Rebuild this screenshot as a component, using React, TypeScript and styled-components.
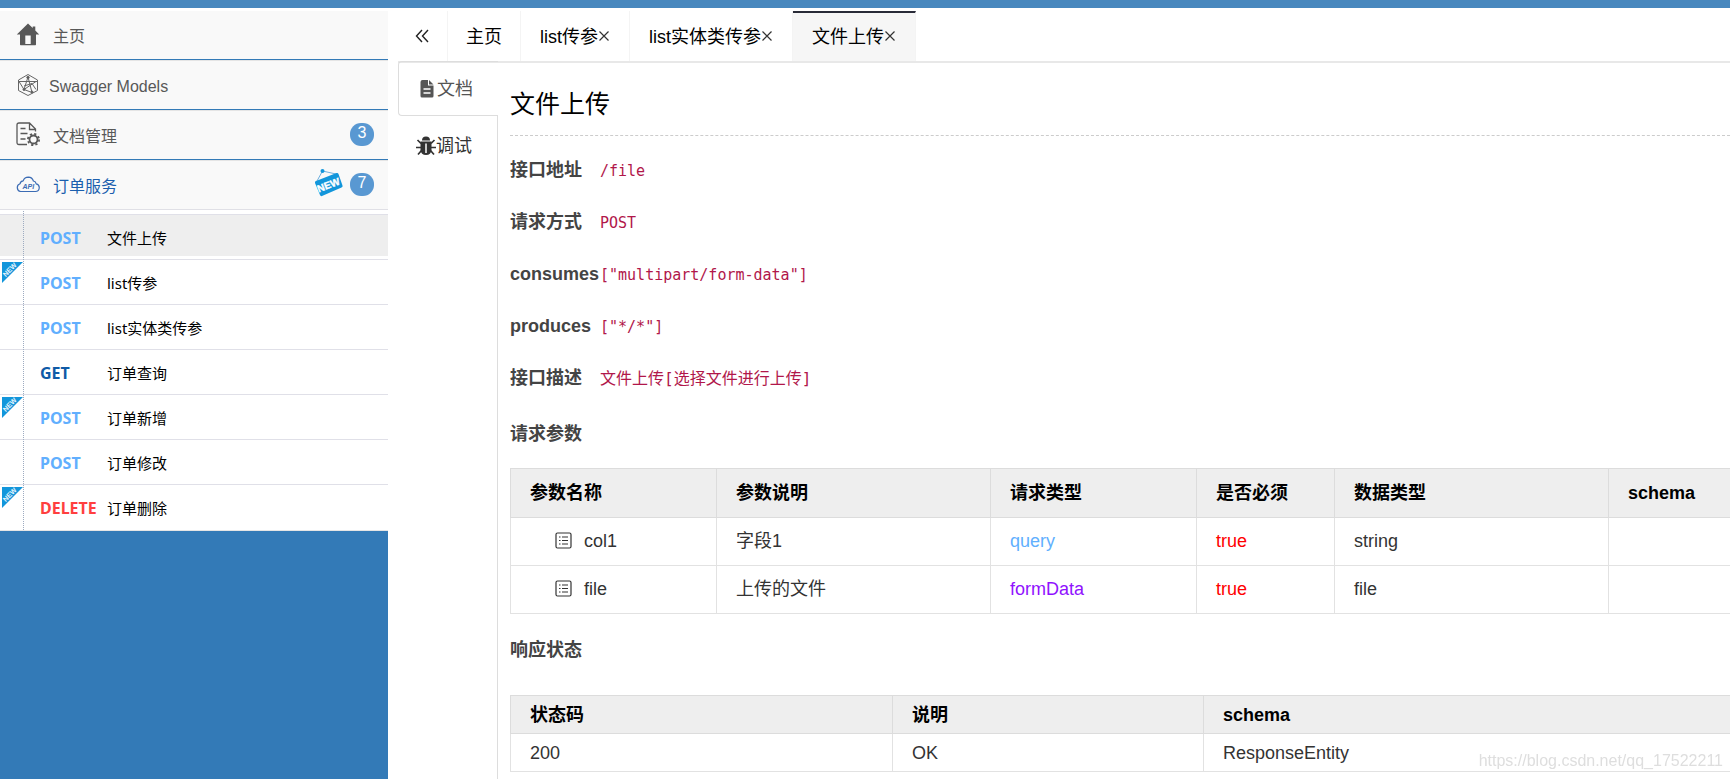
import React from 'react';
import styled, { createGlobalStyle, css } from 'styled-components';

const GlobalStyle = createGlobalStyle`
  *, *::before, *::after { box-sizing: border-box; }
  html, body, #root { height: 100%; }
  body {
    margin: 0;
    overflow: hidden;
    background: #fff;
    color: #333;
    font-family: "Liberation Sans", "Noto Sans CJK SC", sans-serif;
    font-size: 16px;
  }
  ul { list-style: none; margin: 0; padding: 0; }
  h1, h2, dl, dt, dd { margin: 0; }
  button { font: inherit; color: inherit; border: 0; background: none; padding: 0; cursor: pointer; }
  a { color: inherit; text-decoration: none; }
  svg { display: block; flex: none; }
`;

const Page = styled.div`
  display: flex;
  flex-direction: column;
  height: 100%;
`;

const TopBar = styled.header`
  flex: none;
  height: 8px;
  background: #4888be;
`;

const Body = styled.div`
  display: flex;
  flex: 1;
  min-height: 0;
`;

const Sidebar = styled.nav`
  flex: none;
  width: 388px;
  background: #337ab7;
`;

const MenuLink = styled.a<{ $active?: boolean; $gap: number }>`
  display: flex;
  align-items: center;
  gap: ${(p) => p.$gap}px;
  height: 50px;
  padding: 0 14px 0 16px;
  background: #f9f9f9;
  border-top: 1px solid #e5e5e5;
  border-bottom: 1px solid ${(p) => (p.$active ? '#e0e0e6' : '#337ab7')};
  color: ${(p) => (p.$active ? '#1b5fae' : '#585858')};
`;

const Menu = styled.ul`
  padding-top: 2px;
  background: #fff;
  > li:first-child > ${MenuLink} {
    border-top-color: #fff;
  }
`;

const MenuText = styled.span`
  flex: 1;
  padding-top: 4px;
  line-height: 24px;
`;

const Badge = styled.span`
  width: 24px;
  height: 23px;
  margin-bottom: 2px;
  border-radius: 11px;
  background: #5998d2;
  color: #fff;
  line-height: 20px;
  text-align: center;
`;

const TagSlot = styled.span`
  margin: 0 -6px 4px 0;
`;

const ApiList = styled.ul`
  position: relative;
  padding: 4px 0 1px;
  background: #fff;
  border-bottom: 1px solid #e5e5e5;
  &::before {
    content: '';
    position: absolute;
    z-index: 1;
    left: 23px;
    top: 1px;
    bottom: 0;
    border-left: 1px dotted #9dabc0;
  }
`;

const ApiItem = styled.li`
  position: relative;
  height: 45px;
  border-top: 1px solid #e0e0e8;
`;

const ApiLink = styled.a<{ $active?: boolean }>`
  display: flex;
  align-items: center;
  height: 41px;
  padding: 4px 0 0 40px;
  background: ${(p) => (p.$active ? '#eee' : 'transparent')};
  color: #000;
  font-family: "Noto Sans", "Noto Sans CJK SC", sans-serif;
  font-size: 15px;
  line-height: 24px;
`;

const methodColors = { POST: '#61affe', GET: '#0f5ba7', DELETE: '#ff3f3f' };
type Method = keyof typeof methodColors;

const MethodName = styled.span<{ $method: Method }>`
  width: 67px;
  font-size: 16px;
  font-weight: 700;
  color: ${(p) => methodColors[p.$method]};
`;

const Corner = styled.span`
  position: absolute;
  left: 2px;
  top: 2px;
`;

const Main = styled.main`
  display: flex;
  flex-direction: column;
  flex: 1;
  min-width: 0;
  padding-left: 10px;
`;

const TabBar = styled.div`
  display: flex;
  flex: none;
  height: 55px;
  padding-top: 3px;
  border-bottom: 2px solid #e8e8e8;
  font-size: 18px;
  color: #000;
`;

const Collapse = styled.button`
  width: 50px;
  padding-left: 16px;
  border-right: 1px solid #f4f4f4;
`;

const Tab = styled.div<{ $active?: boolean; $closable?: boolean }>`
  display: flex;
  align-items: center;
  padding: 0 ${(p) => (p.$closable ? 19 : 18)}px 3px;
  border-right: 1px solid #f4f4f4;
  ${(p) =>
    p.$active &&
    css`
      background: #f6f6f6;
      border-top: 2px solid #292b38;
      padding-bottom: 5px;
    `}
`;

const CloseButton = styled.button`
  padding-top: 3px;
`;

const Panel = styled.div`
  display: flex;
  flex: 1;
  min-height: 0;
`;

const SideTabs = styled.div`
  display: flex;
  flex-direction: column;
  flex: none;
  width: 100px;
  margin-top: -2px;
  &::after {
    content: '';
    flex: 1;
    border-right: 1px solid #ddd;
  }
`;

const SideTab = styled.button<{ $active?: boolean }>`
  display: flex;
  align-items: center;
  height: 55px;
  font-size: 18px;
  line-height: 24px;
  ${(p) =>
    p.$active
      ? css`
          padding-left: 20px;
          gap: 2px;
          color: #555;
          border: 1px solid #ddd;
          border-right: 0;
          border-radius: 4px 0 0 4px;
        `
      : css`
          padding-left: 18px;
          padding-top: 4px;
          border-right: 1px solid #ddd;
        `}
`;

const Doc = styled.article`
  flex: 1;
  min-width: 0;
  overflow: hidden;
  padding-left: 12px;
`;

const Title = styled.h1`
  padding: 23px 0 13px;
  border-bottom: 1px dashed #ccc;
  color: #000;
  font-size: 25px;
  font-weight: 400;
  line-height: 36px;
`;

const Fields = styled.dl`
  padding: 8px 0 4px;
`;

const Field = styled.div`
  display: flex;
  align-items: center;
  height: 52px;
  margin-bottom: 0;
`;

const FieldName = styled.dt`
  width: 90px;
  color: #444;
  font-size: 18px;
  font-weight: 700;
  line-height: 24px;
`;

const FieldValue = styled.dd`
  padding-top: 2px;
`;

const Code = styled.code<{ $cjk?: boolean }>`
  color: #b1174a;
  font-family: "DejaVu Sans Mono", "Noto Sans CJK SC", monospace;
  font-size: ${(p) => (p.$cjk ? 16 : 15)}px;
  line-height: 24px;
`;

const Heading = styled.h2`
  color: #444;
  font-size: 18px;
  font-weight: 700;
  line-height: 24px;
`;

const Section = styled.section<{ $spaced?: boolean }>`
  display: flex;
  flex-direction: column;
  gap: ${(p) => (p.$spaced ? 33 : 22)}px;
  padding-top: ${(p) => (p.$spaced ? 24 : 14)}px;
`;

const Table = styled.table<{ $compact?: boolean }>`
  width: 1376px;
  table-layout: fixed;
  border-collapse: collapse;
  font-size: 18px;
  line-height: 24px;
  th, td {
    height: ${(p) => (p.$compact ? 38 : 48)}px;
    padding: 0 19px ${(p) => (p.$compact ? 0 : 2)}px;
    border: 1px solid #e2e2e2;
    text-align: left;
  }
  th {
    height: ${(p) => (p.$compact ? 38 : 49)}px;
    padding-bottom: 0;
    background: #eee;
    color: #000;
    border-color: #dcdcdc;
  }
`;

const Col = styled.col<{ $w: number }>`
  width: ${(p) => p.$w}px;
`;

const ParamName = styled.span`
  display: flex;
  align-items: center;
  gap: 12px;
  padding-left: 25px;
`;

const Kind = styled.span<{ $color: string }>`
  color: ${(p) => p.$color};
`;

const Watermark = styled.span`
  position: fixed;
  right: 7px;
  bottom: 7px;
  color: #dedede;
  font-size: 16px;
  line-height: 22px;
`;

const HomeIcon = () => (
  <svg width="24" height="24" viewBox="0 0 24 24" fill="#585858">
    <path fillRule="evenodd" d="M12 .500.800 11.500H4V21.500q0 .700.700.700h14.600q.700 0 .700-.700V11.500h3.200L19.300 7.600V3.500h-2.600v1.600zM9.300 12.500h5.400v8.500H9.300z" />
  </svg>
);

const ModelsIcon = () => (
  <svg width="24" height="24" viewBox="0 0 24 24" fill="none" stroke="#666" strokeWidth="1">
    <path d="M12 1.500 21.500 7v10.500L12 22.500 2.500 17.500V7z" />
    <path d="M3 8.500h18M3 8.500l5 8 8 3M12 4 8 16.500 20 8.500M12 4l4 15.500M8 13l8-2.500 4 6" />
    <circle cx="12" cy="4.500" r="1.200" fill="#585858" />
    <circle cx="8" cy="16.500" r="1" fill="#585858" />
    <circle cx="16" cy="19" r="1" fill="#585858" />
  </svg>
);

const DocSettingsIcon = () => (
  <svg width="24" height="26" viewBox="0 0 24 26" fill="none" stroke="#585858" strokeWidth="1.300">
    <path d="M11 22.500H3Q1 22.500 1 20.500V3Q1 1 3 1h10.500l6 6v2.500M13.500 1v6.500h6M4.500 6.500h5M4.500 11.500h7M4.500 17h5" />
    <circle cx="17.500" cy="17.500" r="4" strokeWidth="1.800" />
    <circle cx="17.500" cy="17.500" r="5.600" strokeWidth="1.800" strokeDasharray="2.200 2.198" />
  </svg>
);

const CloudApiIcon = () => (
  <svg width="24" height="24" viewBox="0 0 24 24" fill="none" stroke="#3c6cb4" strokeWidth="1.200">
    <path d="M4.500 18.500h15a3.900 3.900 0 0 0 .700-7.700q-.400-2.300-2.800-2.800Q16.200 4.300 12.400 4.200 8.500 4.200 7.200 7.800 4.500 8 4 10.800A4 4 0 0 0 4.500 18.500z" />
    <text x="12.300" y="15.500" fontSize="7" fontStyle="italic" fontWeight="700" textAnchor="middle" fill="#3c6cb4" stroke="none" fontFamily="Liberation Sans, sans-serif">API</text>
  </svg>
);

const NewTagIcon = () => (
  <svg width="29" height="28" viewBox="0 0 29 28">
    <path d="M3 12 8.500 2 22 5" fill="none" stroke="#6fb0e0" strokeWidth="1" />
    <circle cx="8.500" cy="2" r="2" fill="#1296db" />
    <path d="M2 12 22.500 4q1.500-.5 2 1l4 11.500q.5 1.500-1 2L8 27q-1.500.5-2-1L1 14q-.5-1.500 1-2z" fill="#1296db" />
    <text x="14.500" y="19.500" fontSize="10" fontWeight="700" textAnchor="middle" fill="#fff" stroke="#fff" strokeWidth=".4" transform="rotate(-21 14.500 16)" fontFamily="Liberation Sans, sans-serif">NEW</text>
  </svg>
);

const NewCornerIcon = () => (
  <svg width="21" height="21" viewBox="0 0 21 21" overflow="visible">
    <path d="M0 0h21L0 21z" fill="#1296db" />
    <text x="8" y="10" fontSize="7" fontWeight="700" textAnchor="middle" fill="#e4f3fc" transform="rotate(-45 8 8)" fontFamily="Liberation Sans, sans-serif">NEW</text>
  </svg>
);

const CollapseIcon = () => (
  <svg width="16" height="16" viewBox="0 0 16 16" fill="none" stroke="#222" strokeWidth="1.400">
    <path d="M8 2 2.500 8 8 14M14 2 8.500 8 14 14" />
  </svg>
);

const CloseIcon = () => (
  <svg width="12" height="12" viewBox="0 0 12 12" fill="none" stroke="#333" strokeWidth="1.200">
    <path d="m1.500 1.500 9 9M10.500 1.500l-9 9" />
  </svg>
);

const FileIcon = () => (
  <svg width="16" height="18" viewBox="0 0 16 18">
    <path d="M3.500 0H9v5.500h5.500V16q0 1.500-1.500 1.500H3Q1.500 17.500 1.500 16V2q0-2 2-2zM10 0l4.500 4.500H10z" fill="#555" />
    <path d="M4.500 9h7M4.500 13h7" stroke="#fff" strokeWidth="1.500" />
  </svg>
);

const BugIcon = () => (
  <svg width="20" height="20" viewBox="0 0 20 20">
    <path d="M6 4.500a4 4 0 0 1 8 0z" fill="#333" />
    <path d="M4.500 5.500h11V14q-.5 5-5.500 5t-5.500-5z" fill="#333" />
    <path d="M5 7.500 1.500 4M15 7.500 18.500 4M5 11.500H0M15 11.500h5M5.500 14.500 2 18.500M14.500 14.500 18 18.500" fill="none" stroke="#333" strokeWidth="1.700" />
    <path d="M10 7.500V17" stroke="#fff" strokeWidth="1.500" />
  </svg>
);

const ListIcon = () => (
  <svg width="17" height="18" viewBox="0 0 17 18" fill="none" stroke="#333" strokeWidth="1.200">
    <rect x="1" y="1" width="15" height="15" rx="1.500" />
    <path d="M4 5h1.500M7 5h6M4 8.500h1.500M7 8.500h6M4 12h1.500M7 12h6" />
  </svg>
);

const apis: { method: Method; name: string; fresh?: boolean; active?: boolean }[] = [
  { method: 'POST', name: '文件上传', active: true },
  { method: 'POST', name: 'list传参', fresh: true },
  { method: 'POST', name: 'list实体类传参' },
  { method: 'GET', name: '订单查询' },
  { method: 'POST', name: '订单新增', fresh: true },
  { method: 'POST', name: '订单修改' },
  { method: 'DELETE', name: '订单删除', fresh: true },
];

const tabs = [
  { name: '主页' },
  { name: 'list传参', closable: true },
  { name: 'list实体类传参', closable: true },
  { name: '文件上传', closable: true, active: true },
];

const fields = [
  { name: '接口地址', value: '/file' },
  { name: '请求方式', value: 'POST' },
  { name: 'consumes', value: '["multipart/form-data"]' },
  { name: 'produces', value: '["*/*"]' },
  { name: '接口描述', value: '文件上传[选择文件进行上传]', cjk: true },
];

const params = [
  { name: 'col1', note: '字段1', kind: 'query', color: '#61affe', type: 'string' },
  { name: 'file', note: '上传的文件', kind: 'formData', color: '#9012fe', type: 'file' },
];

export default function App() {
  return (
    <Page>
      <GlobalStyle />
      <TopBar />
      <Body>
        <Sidebar>
          <Menu>
            <li>
              <MenuLink href="#home" $gap={13}><HomeIcon /><MenuText>主页</MenuText></MenuLink>
            </li>
            <li>
              <MenuLink href="#models" $gap={9}><ModelsIcon /><MenuText>Swagger Models</MenuText></MenuLink>
            </li>
            <li>
              <MenuLink href="#docs" $gap={13}><DocSettingsIcon /><MenuText>文档管理</MenuText><Badge>3</Badge></MenuLink>
            </li>
            <li>
              <MenuLink href="#orders" $gap={13} $active>
                <CloudApiIcon />
                <MenuText>订单服务</MenuText>
                <TagSlot><NewTagIcon /></TagSlot>
                <Badge>7</Badge>
              </MenuLink>
              <ApiList>
                {apis.map((api) => (
                  <ApiItem key={api.name}>
                    {api.fresh && <Corner><NewCornerIcon /></Corner>}
                    <ApiLink href="#api" $active={api.active}>
                      <MethodName $method={api.method}>{api.method}</MethodName>
                      {api.name}
                    </ApiLink>
                  </ApiItem>
                ))}
              </ApiList>
            </li>
          </Menu>
        </Sidebar>
        <Main>
          <TabBar>
            <Collapse aria-label="收起"><CollapseIcon /></Collapse>
            {tabs.map((tab) => (
              <Tab key={tab.name} $active={tab.active} $closable={tab.closable}>
                <button>{tab.name}</button>
                {tab.closable && <CloseButton aria-label="关闭"><CloseIcon /></CloseButton>}
              </Tab>
            ))}
          </TabBar>
          <Panel>
            <SideTabs>
              <SideTab $active><FileIcon />文档</SideTab>
              <SideTab><BugIcon />调试</SideTab>
            </SideTabs>
            <Doc>
              <Title>文件上传</Title>
              <Fields>
                {fields.map((f) => (
                  <Field key={f.name}>
                    <FieldName>{f.name}</FieldName>
                    <FieldValue><Code $cjk={f.cjk}>{f.value}</Code></FieldValue>
                  </Field>
                ))}
              </Fields>
              <Section>
                <Heading>请求参数</Heading>
                <Table>
                  <colgroup>
                    <Col $w={206} /><Col $w={274} /><Col $w={206} /><Col $w={138} /><Col $w={274} /><Col $w={278} />
                  </colgroup>
                  <thead>
                    <tr>
                      <th>参数名称</th><th>参数说明</th><th>请求类型</th><th>是否必须</th><th>数据类型</th><th>schema</th>
                    </tr>
                  </thead>
                  <tbody>
                    {params.map((p) => (
                      <tr key={p.name}>
                        <td><ParamName><ListIcon />{p.name}</ParamName></td>
                        <td>{p.note}</td>
                        <td><Kind $color={p.color}>{p.kind}</Kind></td>
                        <td><Kind $color="#f00">true</Kind></td>
                        <td>{p.type}</td>
                        <td />
                      </tr>
                    ))}
                  </tbody>
                </Table>
              </Section>
              <Section $spaced>
                <Heading>响应状态</Heading>
                <Table $compact>
                  <colgroup>
                    <Col $w={382} /><Col $w={311} /><Col $w={683} />
                  </colgroup>
                  <thead>
                    <tr><th>状态码</th><th>说明</th><th>schema</th></tr>
                  </thead>
                  <tbody>
                    <tr><td>200</td><td>OK</td><td>ResponseEntity</td></tr>
                  </tbody>
                </Table>
              </Section>
            </Doc>
          </Panel>
        </Main>
      </Body>
      <Watermark>https://blog.csdn.net/qq_17522211</Watermark>
    </Page>
  );
}
